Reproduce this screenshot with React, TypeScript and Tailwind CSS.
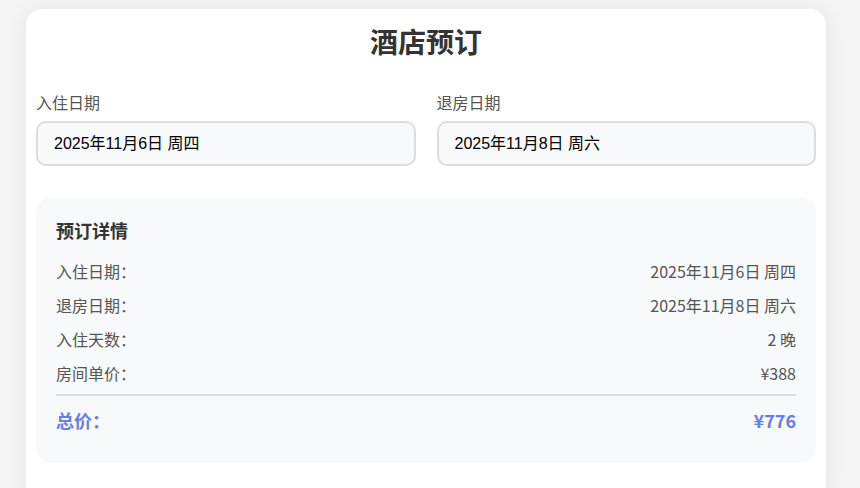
const cjk = { fontFamily: '"Noto Sans CJK SC", "Noto Sans", sans-serif' };
const inputFont = { fontFamily: '"Liberation Sans", "Noto Sans CJK SC", sans-serif' };

const rows = [
  { label: '入住日期：', value: '2025年11月6日 周四' },
  { label: '退房日期：', value: '2025年11月8日 周六' },
  { label: '入住天数：', value: '2 晚' },
  { label: '房间单价：', value: '¥388' },
];

function DateField({ label, value }: { label: string; value: string }) {
  return (
    <div className="flex flex-col">
      <label className="text-[16px] leading-6 text-[#555] mb-[7px]">{label}</label>
      <div
        className="h-[45px] flex items-center px-[16px] rounded-[10px] border-2 border-[#ddd] bg-[#f8f9fa] text-[16px] text-black"
        style={inputFont}
      >
        {value}
      </div>
    </div>
  );
}

export default function App() {
  return (
    <div className="min-h-screen bg-[#f5f5f5] pt-[9px] pl-[26px] pr-[34px]" style={cjk}>
      <div className="bg-white rounded-[16px] shadow-[0_0_24px_rgba(0,0,0,0.07)] px-[10px] pt-[14px] pb-[40px] min-h-[500px]">
        {/* Title */}
        <h1 className="text-center text-[28px] leading-9 font-bold text-[#333]">酒店预订</h1>

        {/* Dates */}
        <div className="grid grid-cols-2 gap-[21px] mt-[31px]">
          <DateField label="入住日期" value="2025年11月6日 周四" />
          <DateField label="退房日期" value="2025年11月8日 周六" />
        </div>

        {/* Summary */}
        <div className="mt-[31px] bg-[#f8f9fa] rounded-[15px] px-[20px] pt-[20px] pb-[28px]">
          <h3 className="text-[18px] leading-[27px] font-bold text-[#333] mb-[15px]">预订详情</h3>
          <div className="flex flex-col gap-[10px]">
            {rows.map((r) => (
              <div key={r.label} className="flex justify-between text-[16px] leading-6 text-[#555]">
                <span>{r.label}</span>
                <span>{r.value}</span>
              </div>
            ))}
          </div>
          <div className="mt-[9px] border-t-2 border-[#ddd] pt-[11px] pb-[2px] flex justify-between items-center font-bold text-[#667eea]">
            <span className="text-[18px] leading-[26px]">总价：</span>
            <span className="text-[18px] leading-[26px]">¥776</span>
          </div>
        </div>
      </div>
    </div>
  );
}
